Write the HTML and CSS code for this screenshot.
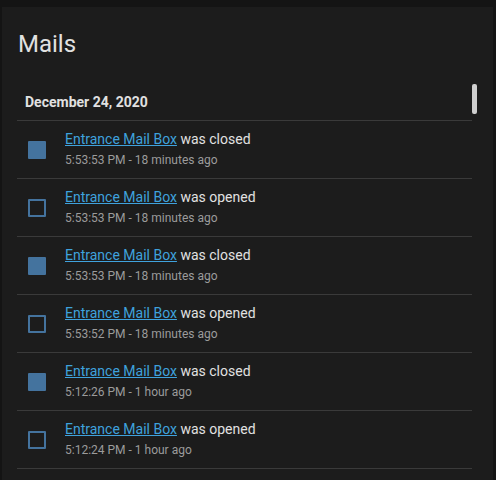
FILE: index.html
```html
<!DOCTYPE html>
<html lang="en">
<head>
  <meta charset="UTF-8">
  <meta name="viewport" content="width=device-width, initial-scale=1.0">
  <title>Mails - Logbook</title>
  <link rel="stylesheet" href="styles.css">
</head>
<body>

  <!-- Logbook Card -->
  <div class="card">
    <h1 class="card-header">Mails</h1>

    <div class="card-body">
      <div class="entries">
        <div class="date">December 24, 2020</div>

        <div class="entry">
          <span class="icon closed"></span>
          <div class="message">
            <div class="line"><a href="#">Entrance Mail Box</a> was closed</div>
            <div class="time">5:53:53 PM - 18 minutes ago</div>
          </div>
        </div>

        <div class="entry">
          <span class="icon opened"></span>
          <div class="message">
            <div class="line"><a href="#">Entrance Mail Box</a> was opened</div>
            <div class="time">5:53:53 PM - 18 minutes ago</div>
          </div>
        </div>

        <div class="entry">
          <span class="icon closed"></span>
          <div class="message">
            <div class="line"><a href="#">Entrance Mail Box</a> was closed</div>
            <div class="time">5:53:53 PM - 18 minutes ago</div>
          </div>
        </div>

        <div class="entry">
          <span class="icon opened"></span>
          <div class="message">
            <div class="line"><a href="#">Entrance Mail Box</a> was opened</div>
            <div class="time">5:53:52 PM - 18 minutes ago</div>
          </div>
        </div>

        <div class="entry">
          <span class="icon closed"></span>
          <div class="message">
            <div class="line"><a href="#">Entrance Mail Box</a> was closed</div>
            <div class="time">5:12:26 PM - 1 hour ago</div>
          </div>
        </div>

        <div class="entry">
          <span class="icon opened"></span>
          <div class="message">
            <div class="line"><a href="#">Entrance Mail Box</a> was opened</div>
            <div class="time">5:12:24 PM - 1 hour ago</div>
          </div>
        </div>
      </div>

      <!-- fake scrollbar -->
      <div class="scrollbar">
        <div class="thumb"></div>
      </div>
    </div>
  </div>

</body>
</html>
```

FILE: styles.css
```css
html,
body {
  height: 100%;
  overflow: hidden;
}

body {
  font-family: Roboto, 'Noto Sans', sans-serif;
  background-color: #141414;
  margin: 0;
  padding: 7px 3px 0 2px;
  box-sizing: border-box;
  color: #e1e1e1;
}

/* Card */
.card {
  background-color: #1c1c1c;
  height: 600px;
}

.card-header {
  margin: 0;
  padding: 21px 16px 0 16px;
  font-size: 24px;
  font-weight: 400;
  line-height: 32px;
  color: #e1e1e1;
}

.card-body {
  display: flex;
  padding: 24px 15px 0 15px;
}

.entries {
  flex: 1;
}

/* Date heading */
.date {
  height: 36px;
  line-height: 36px;
  padding-left: 8px;
  font-size: 14px;
  font-weight: 700;
  color: #e1e1e1;
  border-bottom: 1px solid #3a3a3a;
}

/* Entries */
.entry {
  display: flex;
  align-items: center;
  padding: 8px 0 9px 11px;
  border-bottom: 1px solid #3a3a3a;
}

.icon {
  width: 18px;
  height: 18px;
  box-sizing: border-box;
  border-radius: 1px;
  margin: 1px 19px 0 0;
  flex-shrink: 0;
}

.icon.closed {
  background-color: #44739e;
}

.icon.opened {
  border: 2px solid #44739e;
}

.line {
  font-size: 14px;
  line-height: 20px;
}

.line a {
  color: #3fa2dd;
  text-decoration: underline;
}

.time {
  font-size: 12px;
  line-height: 20px;
  padding-top: 1px;
  margin-bottom: -1px;
  color: #9b9b9b;
}

/* Scrollbar */
.scrollbar {
  width: 6px;
}

.thumb {
  width: 5px;
  height: 30px;
  background-color: #cfcfcf;
  border-radius: 2px;
}
```
